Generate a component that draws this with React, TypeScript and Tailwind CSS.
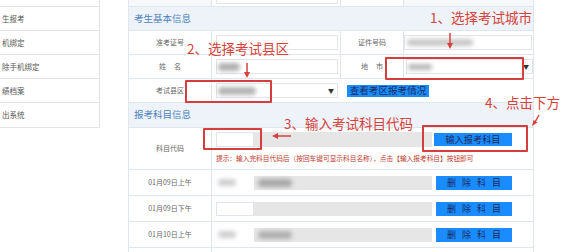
import React from "react";

const Label = ({ children }: { children: React.ReactNode }) => (
  <div className="border-r border-[#dfe6ee] flex items-center justify-center text-[7px] text-[#666] leading-none whitespace-nowrap">
    {children}
  </div>
);

const Arrow = () => <span className="absolute right-[3px] top-1/2 -translate-y-1/2 text-[6px] text-[#333] leading-none">▼</span>;

const DelBtn = () => (
  <div className="w-[76px] h-[14px] bg-[#1a8cff] flex items-center justify-center gap-[6px] text-[9px] text-[#1c2b5c] leading-none">
    <span>删</span><span>除</span><span>科</span><span>目</span>
  </div>
);

export default function App() {
  const side = ["生报考", "机绑定", "除手机绑定", "绩档案", "出系统"];
  return (
    <div className="relative w-[588px] h-[252px] overflow-hidden bg-white flex font-['Noto_Sans_CJK_SC',sans-serif]">
      {/* sidebar */}
      <div className="w-[100px] h-[128px] border-r border-b border-[#e3e3e3] flex flex-col shrink-0">
        <div className="h-[7px] border-b border-[#e3e3e3] shrink-0" />
        {side.map((t, i) => (
          <div
            key={t}
            className={
              "h-[24px] shrink-0 flex items-center pl-[2px] text-[7.5px] text-[#555] leading-none " +
              (i < 4 ? "border-b border-[#e3e3e3]" : "")
            }
          >
            {t}
          </div>
        ))}
      </div>

      {/* main */}
      <div className="ml-[28px] w-[406px] shrink-0 flex flex-col border-l border-r border-[#dfe6ee]">
        {/* partial top row */}
        <div className="grid grid-cols-[83px_129px_63px_129px] h-[7px] border-b border-[#dfe6ee] overflow-hidden shrink-0">
          <div className="border-r border-[#dfe6ee] bg-[#f6f8fa]" />
          <div className="border-r border-[#dfe6ee] pl-[4px] flex items-end pb-[2px]"><div className="w-[122px] h-[4px] border-b border-x border-[#e3e6ea]" /></div>
          <div className="border-r border-[#dfe6ee]" />
          <div className="bg-[#f6f8fa]" />
        </div>

        {/* header 1 */}
        <div className="h-[24px] shrink-0 bg-[#eef3f9] border-b border-[#dfe6ee] flex items-center pl-[5px] text-[9.5px] text-[#4d82bd] leading-none">
          考生基本信息
        </div>

        {/* row 准考证号 */}
        <div className="grid grid-cols-[83px_129px_63px_129px] h-[24px] shrink-0 border-b border-[#dfe6ee]">
          <Label>准考证号</Label>
          <div className="border-r border-[#dfe6ee] flex items-center pl-[4px]">
            <div className="w-[122px] h-[15px] border border-[#e1e4e8] bg-white" />
          </div>
          <Label>证件号码</Label>
          <div className="flex items-center">
            <div className="w-[128px] h-[15px] border border-[#e1e4e8] bg-white flex items-center pl-[2px]">
              <div className="w-[66px] h-[7px] bg-[#c8c8c8] blur-[2px] rounded" />
            </div>
          </div>
        </div>

        {/* row 姓名 */}
        <div className="grid grid-cols-[83px_129px_63px_129px] h-[24px] shrink-0 border-b border-[#dfe6ee]">
          <Label><span className="tracking-[8px] pl-[8px]">姓名</span></Label>
          <div className="border-r border-[#dfe6ee] flex items-center pl-[4px]">
            <div className="w-[122px] h-[15px] border border-[#e1e4e8] bg-white flex items-center pl-[1px]">
              <div className="w-[22px] h-[8px] bg-[#b0b0b0] blur-[2px] rounded" />
            </div>
          </div>
          <Label><span className="tracking-[8px] pl-[8px]">地市</span></Label>
          <div className="flex items-center pl-[2px]">
            <div className="relative w-[127px] h-[15px] border border-[#e1e4e8] bg-white flex items-center pl-[1px]">
              <div className="w-[24px] h-[6px] bg-[#b8b8b8] blur-[2px] rounded" />
              <Arrow />
            </div>
          </div>
        </div>

        {/* row 考试县区 */}
        <div className="grid grid-cols-[83px_323px] h-[24px] shrink-0 border-b border-[#dfe6ee]">
          <Label>考试县区</Label>
          <div className="flex items-center pl-[4px] gap-[9px]">
            <div className="relative w-[122px] h-[15px] border border-[#e1e4e8] bg-white flex items-center pl-[1px]">
              <div className="w-[38px] h-[8px] bg-[#b4b4b4] blur-[2px] rounded" />
              <Arrow />
            </div>
            <div className="w-[82px] h-[12px] bg-[#1a8cff] flex items-center justify-center text-[9.6px] text-[#1c2b5c] leading-none whitespace-nowrap">
              查看考区报考情况
            </div>
          </div>
        </div>

        {/* header 2 */}
        <div className="h-[25px] shrink-0 bg-[#eef3f9] border-b border-[#dfe6ee] flex items-center pl-[5px] text-[9.5px] text-[#4d82bd] leading-none">
          报考科目信息
        </div>

        {/* row 科目代码 */}
        <div className="grid grid-cols-[83px_323px] h-[42px] shrink-0 border-b border-[#dfe6ee]">
          <Label>科目代码</Label>
          <div className="flex flex-col pl-[4px] pt-[4px]">
            <div className="flex items-center h-[15px]">
              <div className="w-[38px] h-[15px] border border-[#e1e4e8] bg-white" />
              <div className="w-[178px] h-[15px] bg-[#e6e6e6]" />
              <div className="ml-[2px] w-[78px] h-[13px] bg-[#1a8cff] flex items-center justify-center text-[9.2px] text-[#1c2b5c] leading-none whitespace-nowrap">
                输入报考科目
              </div>
            </div>
            <div className="mt-[8px] text-[6.7px] text-[#c0392b] leading-none whitespace-nowrap">
              提示：输入完科目代码后（按回车键可显示科目名称），点击【输入报考科目】按钮即可
            </div>
          </div>
        </div>

        {/* date rows */}
        <div className="grid grid-cols-[83px_323px] h-[26px] shrink-0 border-b border-[#dfe6ee]">
          <Label>01月09日上午</Label>
          <div className="flex items-center pl-[4px] gap-[4px]">
            <div className="flex items-center h-[14px]">
              <div className="w-[38px] h-[14px] bg-white flex items-center pl-[2px]">
                <div className="w-[18px] h-[7px] bg-[#cfcfcf] blur-[2px] rounded" />
              </div>
              <div className="w-[178px] h-[14px] bg-[#e6e6e6] flex items-center pl-[4px]">
                <div className="w-[34px] h-[8px] bg-[#a8a8a8] blur-[2px] rounded" />
              </div>
            </div>
            <DelBtn />
          </div>
        </div>
        <div className="grid grid-cols-[83px_323px] h-[26px] shrink-0 border-b border-[#dfe6ee]">
          <Label>01月09日下午</Label>
          <div className="flex items-center pl-[4px] gap-[4px]">
            <div className="flex items-center h-[14px]">
              <div className="w-[38px] h-[14px] bg-white border border-[#e1e4e8]" />
              <div className="w-[178px] h-[14px] bg-[#e6e6e6]" />
            </div>
            <DelBtn />
          </div>
        </div>
        <div className="grid grid-cols-[83px_323px] h-[26px] shrink-0 border-b border-[#dfe6ee]">
          <Label>01月10日上午</Label>
          <div className="flex items-center pl-[4px] gap-[4px]">
            <div className="flex items-center h-[14px]">
              <div className="w-[38px] h-[14px] bg-white flex items-center pl-[2px]">
                <div className="w-[18px] h-[7px] bg-[#cfcfcf] blur-[2px] rounded" />
              </div>
              <div className="w-[178px] h-[14px] bg-[#e6e6e6] flex items-center pl-[4px]">
                <div className="w-[34px] h-[8px] bg-[#b0b0b0] blur-[2px] rounded" />
              </div>
            </div>
            <DelBtn />
          </div>
        </div>
        <div className="grid grid-cols-[83px_323px] h-[26px] shrink-0">
          <div className="border-r border-[#dfe6ee]" />
          <div />
        </div>
      </div>

      {/* annotations */}
      <div className="absolute left-[430px] top-[11px] text-[13.5px] leading-none text-[#d6413b] whitespace-nowrap">1、选择考试城市</div>
      <div className="absolute left-[187px] top-[42px] text-[13.5px] leading-none text-[#d6413b] whitespace-nowrap">2、选择考试县区</div>
      <div className="absolute left-[284px] top-[117px] text-[13.5px] leading-none text-[#d6413b] whitespace-nowrap">3、输入考试科目代码</div>
      <div className="absolute left-[485px] top-[96px] text-[13.5px] leading-none text-[#d6413b] whitespace-nowrap">4、点击下方</div>

      {/* red boxes */}
      <div className="absolute left-[385px] top-[57px] w-[139px] h-[23px] border-2 border-[#d63d3d] rounded-[1px]" />
      <div className="absolute left-[185px] top-[80px] w-[87px] h-[23px] border-2 border-[#d63d3d] rounded-[1px]" />
      <div className="absolute left-[203px] top-[128px] w-[59px] h-[22px] border-2 border-[#d63d3d] rounded-[1px]" />
      <div className="absolute left-[422px] top-[125px] w-[106px] h-[27px] border-2 border-[#d63d3d] rounded-[1px]" />

      {/* arrows */}
      <svg className="absolute left-[446px] top-[33px]" width="8" height="16" viewBox="0 0 8 16">
        <line x1="4" y1="0" x2="4" y2="11" stroke="#d6413b" strokeWidth="1.5" />
        <polygon points="1,10 7,10 4,16" fill="#d6413b" />
      </svg>
      <svg className="absolute left-[243px] top-[63px]" width="8" height="15" viewBox="0 0 8 15">
        <line x1="4" y1="0" x2="4" y2="10" stroke="#d6413b" strokeWidth="1.5" />
        <polygon points="1,9 7,9 4,15" fill="#d6413b" />
      </svg>
      <svg className="absolute left-[272px] top-[132px]" width="19" height="8" viewBox="0 0 19 8">
        <line x1="19" y1="4" x2="5" y2="4" stroke="#d6413b" strokeWidth="1.5" />
        <polygon points="0,4 6,1 6,7" fill="#d6413b" />
      </svg>
      <svg className="absolute left-[531px] top-[114px]" width="10" height="13" viewBox="0 0 10 13">
        <line x1="8" y1="1" x2="4" y2="8" stroke="#d6413b" strokeWidth="1.5" />
        <polygon points="1,12 2.5,6 6.5,8.5" fill="#d6413b" />
      </svg>
    </div>
  );
}
